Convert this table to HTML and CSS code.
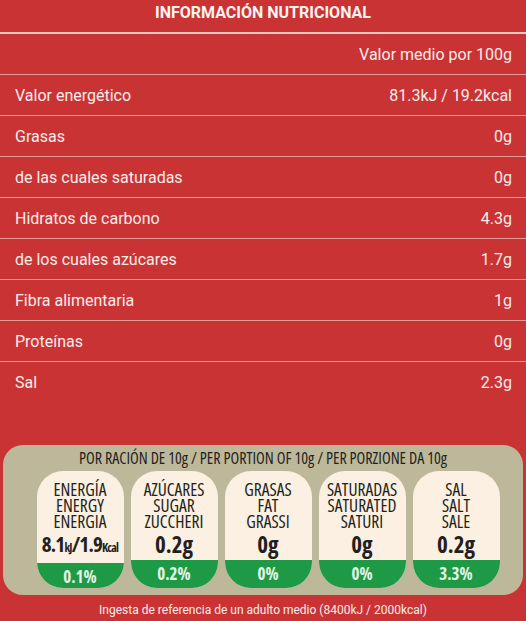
FILE: index.html
```html
<!DOCTYPE html>
<html lang="es">
<head>
<meta charset="UTF-8">
<meta name="viewport" content="width=device-width, initial-scale=1.0">
<title>Información nutricional</title>
<link rel="stylesheet" href="styles.css">
</head>
<body>
    <h1 class="title">INFORMACIÓN NUTRICIONAL</h1>
    <div class="facts">
        <div class="row row-head"><span></span><span>Valor medio por 100g</span></div>
        <div class="row"><span>Valor energético</span><span>81.3kJ / 19.2kcal</span></div>
        <div class="row"><span>Grasas</span><span>0g</span></div>
        <div class="row"><span>de las cuales saturadas</span><span>0g</span></div>
        <div class="row"><span>Hidratos de carbono</span><span>4.3g</span></div>
        <div class="row"><span>de los cuales azúcares</span><span>1.7g</span></div>
        <div class="row"><span>Fibra alimentaria</span><span>1g</span></div>
        <div class="row"><span>Proteínas</span><span>0g</span></div>
        <div class="row row-last"><span>Sal</span><span>2.3g</span></div>
    </div>

    <div class="portion">
        <p class="portion-title">POR RACIÓN DE 10g / PER PORTION OF 10g / PER PORZIONE DA 10g</p>
        <div class="badges">
            <div class="badge">
                <div class="badge-label">ENERGÍA<br>ENERGY<br>ENERGIA</div>
                <div class="badge-value badge-energy">8.1<small>kJ</small>/1.9<small>Kcal</small></div>
                <div class="badge-pct">0.1%</div>
            </div>
            <div class="badge">
                <div class="badge-label">AZÚCARES<br>SUGAR<br>ZUCCHERI</div>
                <div class="badge-value">0.2g</div>
                <div class="badge-pct">0.2%</div>
            </div>
            <div class="badge">
                <div class="badge-label">GRASAS<br>FAT<br>GRASSI</div>
                <div class="badge-value">0g</div>
                <div class="badge-pct">0%</div>
            </div>
            <div class="badge">
                <div class="badge-label">SATURADAS<br>SATURATED<br>SATURI</div>
                <div class="badge-value">0g</div>
                <div class="badge-pct">0%</div>
            </div>
            <div class="badge">
                <div class="badge-label">SAL<br>SALT<br>SALE</div>
                <div class="badge-value">0.2g</div>
                <div class="badge-pct">3.3%</div>
            </div>
        </div>
    </div>

    <p class="note">Ingesta de referencia de un adulto medio (8400kJ / 2000kcal)</p>
</body>
</html>
```

FILE: styles.css
```css
body {
    margin: 0;
    background-color: #C93334;
    color: #FBEDEA;
    font-family: Roboto, "Liberation Sans", sans-serif;
}
.title {
    margin: 0;
    height: 32px;
    line-height: 26px;
    font-size: 16px;
    font-weight: bold;
    text-align: center;
    color: #FFF3F0;
    border-bottom: 2px solid #F1C9C4;
}
.row {
    display: flex;
    justify-content: space-between;
    align-items: center;
    height: 40px;
    padding: 0 14px 0 15px;
    font-size: 16px;
    border-bottom: 1px solid #E59C96;
}
.row-last {
    border-bottom: none;
}
.portion {
    margin: 43px 3px 0;
    height: 150px;
    box-sizing: border-box;
    padding-top: 5px;
    background-color: #BEB89A;
    border-radius: 20px;
    color: #231F20;
    font-family: "Open Sans", sans-serif;
    font-stretch: 75%;
}
.portion-title {
    margin: 0;
    font-size: 16px;
    line-height: 17px;
    text-align: center;
}
.badges {
    display: flex;
    justify-content: center;
    gap: 7px;
    margin-top: 4px;
    padding-left: 10px;
}
.badge {
    width: 87px;
    height: 117px;
    display: flex;
    flex-direction: column;
    align-items: center;
    background-color: #FBF0E1;
    border-radius: 26px;
    overflow: hidden;
}
.badge-label {
    margin-top: 10px;
    font-size: 17.5px;
    line-height: 16px;
    text-align: center;
}
.badge-value {
    flex: 1;
    font-size: 23px;
    font-weight: bold;
    line-height: 30px;
    white-space: nowrap;
}
.badge-energy {
    font-size: 21px;
    letter-spacing: -0.8px;
}
.badge-energy small {
    font-size: 12px;
    letter-spacing: -0.8px;
}
.badge-pct {
    width: 100%;
    height: 28px;
    line-height: 28px;
    text-align: center;
    background-color: #1E9A46;
    color: #E6F5E8;
    font-size: 17px;
    font-weight: bold;
}
.note {
    margin: 8px 0 0;
    font-size: 12px;
    text-align: center;
    color: #FBEDEA;
}
```
